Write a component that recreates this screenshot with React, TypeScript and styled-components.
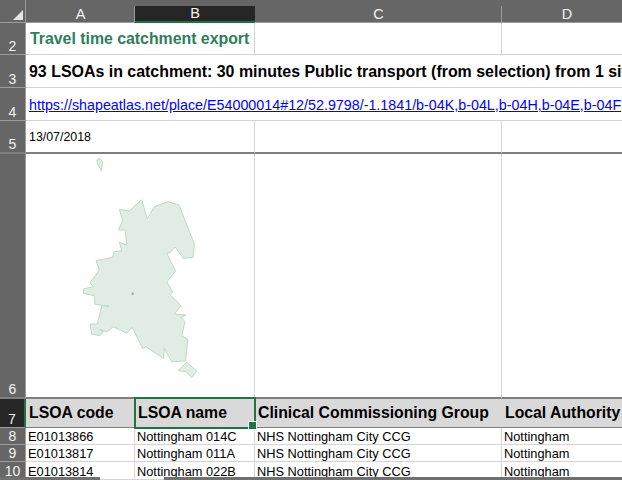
import React from "react";
import styled, { createGlobalStyle } from "styled-components";

const Global = createGlobalStyle`
  html, body { margin: 0; padding: 0; background: #fff; overflow: hidden; }
  * { box-sizing: border-box; }
`;

const Sheet = styled.div`
  width: 622px;
  height: 480px;
  overflow: hidden;
  position: relative;
  display: grid;
  grid-template-columns: 26px 109px 120px 247px 130px;
  grid-template-rows: 23px 32px 33px 33px 33px 245px 29px 17px 17px 18px;
  font-family: "Liberation Sans", Arial, sans-serif;
  color: #000;
  background: #fff;
`;

const Corner = styled.div`
  background: #666;
  border-right: 1px solid #9c9c9c;
  border-bottom: 1px solid #9c9c9c;
  position: relative;
  &::after {
    content: "";
    position: absolute;
    left: 13px;
    top: 10px;
    width: 0;
    height: 0;
    border-style: solid;
    border-width: 0 0 10px 10px;
    border-color: transparent transparent #e6e6e6 transparent;
  }
`;

const ColHead = styled.div<{ $active?: boolean }>`
  background: #666;
  background-image: ${(p) =>
    p.$active
      ? "linear-gradient(#262626, #262626)"
      : "linear-gradient(#9c9c9c, #9c9c9c)"};
  background-size: ${(p) => (p.$active ? "100% 15px" : "1px 16px")};
  background-position: ${(p) => (p.$active ? "0 6px" : "right 6px")};
  background-repeat: no-repeat;
  border-bottom: ${(p) => (p.$active ? "2px solid #217346" : "1px solid #9c9c9c")};
  color: #f2f2f2;
  font-size: 14.5px;
  display: flex;
  align-items: flex-end;
  justify-content: center;
  line-height: 15px;
`;

const RowHead = styled.div<{ $active?: boolean; $thick?: boolean }>`
  background: ${(p) => (p.$active ? "#262626" : "#666")};
  border-right: ${(p) => (p.$active ? "2px solid #217346" : "1px solid #9c9c9c")};
  border-bottom: ${(p) => (p.$thick ? "2px solid #7f7f7f" : "1px solid #9c9c9c")};
  color: #f2f2f2;
  font-size: 14px;
  line-height: 15px;
  display: flex;
  align-items: flex-end;
  justify-content: center;
`;

const Cell = styled.div<{
  $span?: number;
  $thick?: boolean;
  $header?: boolean;
  $noRight?: boolean;
}>`
  grid-column: span ${(p) => p.$span ?? 1};
  min-width: 0;
  overflow: hidden;
  white-space: nowrap;
  display: flex;
  align-items: flex-end;
  padding-left: 3px;
  background: ${(p) => (p.$header ? "#d9d9d9" : "#fff")};
  border-right: ${(p) => (p.$noRight || p.$header ? "none" : "1px solid #d4d4d4")};
  border-bottom: ${(p) =>
    p.$thick
      ? "2px solid #7f7f7f"
      : p.$header
      ? "1px solid #808080"
      : "1px solid #d4d4d4"};
`;

const Title = styled.span`
  font-size: 15.85px;
  font-weight: 700;
  color: #2f7d5b;
  line-height: 18px;
  margin: 0 0 6px 1px;
`;

const Summary = styled.span`
  font-size: 15.95px;
  font-weight: 700;
  line-height: 20px;
  margin-bottom: 5px;
`;

const LinkText = styled.a`
  font-size: 14.3px;
  line-height: 17px;
  color: #0000ff;
  text-decoration: underline;
  margin-bottom: 6px;
`;

const DateText = styled.span`
  font-size: 12.4px;
  line-height: 14px;
  margin-bottom: 8px;
`;

const HeadText = styled.span`
  font-size: 15.8px;
  font-weight: 700;
  line-height: 18px;
  margin-bottom: 5px;
`;

const DataText = styled.span`
  font-size: 12.8px;
  line-height: 14px;
  margin-left: -1px;
`;

const MapSvg = styled.svg`
  display: block;
  width: 228px;
  height: 243px;
  margin-left: -3px;
  margin-bottom: auto;
  flex: none;
`;

const SelectedOverlay = styled.div`
  position: absolute;
  left: 134px;
  top: 397px;
  width: 122px;
  height: 32px;
  border: 2px solid #217346;
  pointer-events: none;
  &::after {
    content: "";
    position: absolute;
    right: -3px;
    bottom: -3px;
    width: 7px;
    height: 7px;
    background: #217346;
    border: 1px solid #fff;
  }
`;

const ScrollBar = styled.div<{ $left: number; $width: number }>`
  position: absolute;
  left: ${(p) => p.$left}px;
  width: ${(p) => p.$width}px;
  bottom: 0;
  height: 3px;
  background: #707070;
`;

const mainShape =
  "141.7,199.7 147.3,218.7 154.3,206.7 167.7,201.7 179,205 194.3,244 193.3,257.3 183.3,258.3 175,247 170,252.7 166.7,253.3 175.7,271 166.7,282 172.7,292 170,294.7 181,305.7 174.3,314 186,315 181,317.3 185,321.7 181.7,336 187.7,339 185.7,361 171.7,361.7 164.3,348.3 163.7,358.7 146,346.7 142.7,348.7 132.3,327.3 126.7,333.3 113.3,326.7 106.7,332 99.3,329.3 103.3,331.7 100,335.7 91.7,334 90,324 97.3,324 101.7,305.7 109,306.3 95,304.3 94.3,295.7 83.3,293.3 83.3,289 93.3,286.7 90,282.7 99.3,270 96,260.7 112.7,257.3 114,251.7 121.7,250.7 119.3,242.3 126.7,245 125,230 118.3,230 122.7,220.7 119.3,209.3 129.3,211";
const northIsland = "97,160 99.3,158 102.7,162 101.3,170.7 97.3,164";
const southIsland = "178,370.7 186.7,362.3 196.7,371 191.7,377.7 186,371.7";

const rows = [
  { n: 8, code: "E01013866", name: "Nottingham 014C" },
  { n: 9, code: "E01013817", name: "Nottingham 011A" },
  { n: 10, code: "E01013814", name: "Nottingham 022B" },
];

export default function App() {
  return (
    <>
      <Global />
      <Sheet>
        <Corner />
        <ColHead>A</ColHead>
        <ColHead $active>B</ColHead>
        <ColHead>C</ColHead>
        <ColHead>D</ColHead>

        <RowHead>2</RowHead>
        <Cell $span={2}>
          <Title>Travel time catchment export</Title>
        </Cell>
        <Cell />
        <Cell />

        <RowHead>3</RowHead>
        <Cell $span={4} $noRight>
          <Summary>
            93 LSOAs in catchment: 30 minutes Public transport (from selection) from 1 site
          </Summary>
        </Cell>

        <RowHead>4</RowHead>
        <Cell $span={4} $noRight>
          <LinkText href="#">
            https://shapeatlas.net/place/E54000014#12/52.9798/-1.1841/b-04K,b-04L,b-04H,b-04E,b-04F
          </LinkText>
        </Cell>

        <RowHead $thick>5</RowHead>
        <Cell $span={2} $thick>
          <DateText>13/07/2018</DateText>
        </Cell>
        <Cell $thick />
        <Cell $thick />

        <RowHead $thick>6</RowHead>
        <Cell $span={2} $thick>
          <MapSvg viewBox="26 154 228 243">
            <g fill="#e0ece4" stroke="#bcdac6" strokeWidth="1" strokeLinejoin="round">
              <polygon points={northIsland} />
              <polygon points={mainShape} />
              <polygon points={southIsland} />
            </g>
            <circle cx="132.7" cy="293.7" r="1.2" fill="#9fa8a2" />
          </MapSvg>
        </Cell>
        <Cell $thick />
        <Cell $thick />

        <RowHead $active>7</RowHead>
        <Cell $header>
          <HeadText>LSOA code</HeadText>
        </Cell>
        <Cell $header>
          <HeadText>LSOA name</HeadText>
        </Cell>
        <Cell $header>
          <HeadText>Clinical Commissioning Group</HeadText>
        </Cell>
        <Cell $header>
          <HeadText>Local Authority</HeadText>
        </Cell>

        {rows.map((r) => (
          <React.Fragment key={r.n}>
            <RowHead>{r.n}</RowHead>
            <Cell>
              <DataText>{r.code}</DataText>
            </Cell>
            <Cell>
              <DataText>{r.name}</DataText>
            </Cell>
            <Cell>
              <DataText>NHS Nottingham City CCG</DataText>
            </Cell>
            <Cell>
              <DataText>Nottingham</DataText>
            </Cell>
          </React.Fragment>
        ))}

        <SelectedOverlay />
        <ScrollBar $left={0} $width={100} />
        <ScrollBar $left={164} $width={458} />
      </Sheet>
    </>
  );
}
